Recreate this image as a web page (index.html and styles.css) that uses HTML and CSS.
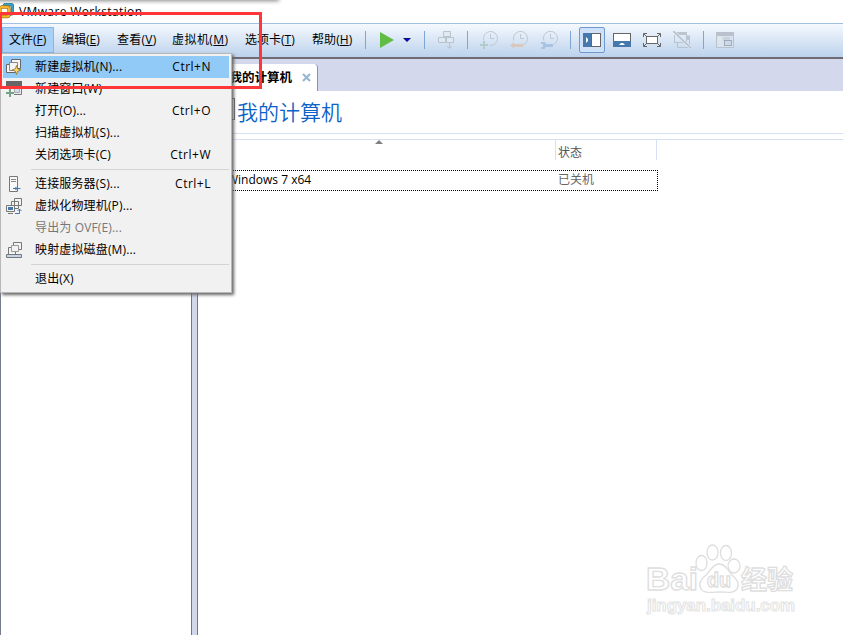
FILE: index.html
```html
<!DOCTYPE html>
<html lang="zh-CN">
<head>
<meta charset="utf-8">
<title>VMware Workstation</title>
<link rel="stylesheet" href="styles.css">
</head>
<body>
<div class="window">
  <header class="titlebar">
    <svg class="logo" width="14" height="16" viewBox="0 0 14 16" fill="none"><rect x="4" y="1.500" width="8.500" height="9.500" rx="2" fill="#fff" stroke="#226f8e" stroke-width="3.400"/><rect x="4" y="1.500" width="8.500" height="9.500" rx="2" stroke="#36a6c8" stroke-width="2"/><rect x="0" y="4" width="9" height="9.500" rx="2" fill="#fff" stroke="#a87416" stroke-width="3.400"/><rect x="0" y="4" width="9" height="9.500" rx="2" stroke="#f6b52c" stroke-width="2"/></svg>
    <span class="title">VMware Workstation</span>
  </header>
  <nav class="toolbar">
    <span class="menu m-file open">文件(<u>F</u>)</span>
    <span class="menu m-edit">编辑(<u>E</u>)</span>
    <span class="menu m-view">查看(<u>V</u>)</span>
    <span class="menu m-vm">虚拟机(<u>M</u>)</span>
    <span class="menu m-tabs">选项卡(<u>T</u>)</span>
    <span class="menu m-help">帮助(<u>H</u>)</span>
    <i class="sep"></i>
    <svg class="play" width="14" height="16" viewBox="0 0 14 16"><path d="M0 0L14 8L0 16Z" fill="#5fbd45"/></svg>
    <svg class="drop" width="8" height="4" viewBox="0 0 8 4"><path d="M0 0H8L4 4Z" fill="#101060"/><path d="M1.500 1H6.500L4 3.200Z" fill="#00f"/></svg>
    <i class="sep s2"></i>
    <span class="cell"><svg width="18" height="20" viewBox="0 0 18 20" fill="#dfe8f3" stroke="#b9c3ce"><path d="M6.500 1.500H13.500V6.500H6.500ZM1.500 7.500H8.500V12.500H1.500ZM9.500 7.500H16.500V12.500H9.500Z"/><path d="M12.500 12V18M10 16L12.500 18.500L15 16" fill="none"/></svg></span>
    <i class="sep s3"></i>
    <span class="cell c4"><svg width="18" height="20" viewBox="0 0 18 20" fill="none" stroke="#bfc8d1"><path d="M3.800 10.500A7 7 0 1 1 9.500 15.400M10.500 4V8.500H14"/><path d="M4 11V19M0 15H8" stroke="#b2ccca" stroke-width="2"/></svg></span>
    <span class="cell"><svg width="18" height="20" viewBox="0 0 18 20" fill="none" stroke="#bfc8d1"><path d="M3.800 10.500A7 7 0 1 1 12.500 15.100M10.500 4V8.500H14"/><path d="M0 15.500L4 12V14H13V17H4V19Z" fill="#d9c9bd" stroke="none"/></svg></span>
    <span class="cell"><svg width="18" height="20" viewBox="0 0 18 20" fill="none" stroke="#bfc8d1"><path d="M3.800 10.500A7 7 0 1 1 13.500 14.600M10.500 4V8.500H14"/><path d="M1 12H5L6 14H13V17H6L5 19H1V17H3V14H1Z" fill="#a9c4e2" stroke="none"/></svg></span>
    <i class="sep s5"></i>
    <span class="cell c6"><span class="pressed"><svg width="18" height="14" viewBox="0 0 18 14"><rect x=".5" y=".5" width="17" height="13" fill="#fff" stroke="#666"/><path d="M0 0H8V14H0Z" fill="#4579ad"/><path d="M8.500 0V14" stroke="#666"/><path d="M3 4L5 6V8L3 10Z" fill="#fff"/></svg></span></span>
    <span class="cell"><svg width="18" height="14" viewBox="0 0 18 14"><rect x=".5" y=".5" width="17" height="13" fill="#fff" stroke="#666"/><path d="M0 8H18V14H0Z" fill="#4579ad"/><path d="M6 12L8 10H10L12 12Z" fill="#fff"/></svg></span>
    <span class="cell"><svg width="18" height="14" viewBox="0 0 18 14" fill="none" stroke="#666"><rect x="3.500" y="3.500" width="11" height="7" fill="#fff"/><path d="M.5 4V.5H4M14 .5H17.500V4M17.500 10V13.500H14M4 13.500H.5V10M1 1L3.500 3.500M17 1L14.500 3.500M1 13L3.500 10.500M17 13L14.500 10.500"/></svg></span>
    <span class="cell"><svg width="18" height="18" viewBox="0 0 18 18" fill="none" stroke="#b9c3ce"><path d="M1.500 4V11.500H13.500V2M4.500 12V16.500H16.500V5H13"/><path d="M2 1H14V4H2ZM13 5H17V9H13Z" fill="#bcc5cf" stroke="none"/><path d="M0 0L18 17" stroke="#dce6f2" stroke-width="3"/><path d="M0 0L18 17" stroke="#aeb9c5" stroke-width="1.200"/></svg></span>
    <i class="sep s5"></i>
    <span class="cell c5"><svg width="18" height="16" viewBox="0 0 18 16" fill="none" stroke="#b7c2ce"><path d="M.5 .5H17.500V15.500H.5Z" fill="#d9e3ef"/><path d="M0 0H18V4H0Z" fill="#b9c2cc" stroke="none"/><path d="M2 5.500H5M2 7.500H5M2 9.500H5" stroke="#e9ebe6"/><path d="M7 5H14V9H7Z" fill="#c7d3e1" stroke="none"/><rect x="8.500" y="8.500" width="7" height="5" fill="#cbd9e9" stroke="#9eabb9"/></svg></span>
  </nav>
  <main class="body">
    <aside class="library"></aside>
    <div class="splitter"></div>
    <section class="content">
      <div class="tabs"><div class="tab"><b>我的计算机</b><svg width="9" height="9" viewBox="0 0 9 9"><path d="M1 1L8 8M8 1L1 8" stroke="#9ab7d1" stroke-width="2.200"/></svg></div></div>
      <div class="heading"><i class="monitor"></i><h1>我的计算机</h1></div>
      <div class="rule"></div>
      <div class="thead"><div class="c-name"><i class="sort"></i></div><div class="c-state">状态</div></div>
      <div class="row"><span class="r-name">Windows 7 x64</span><span class="r-state">已关机</span></div>
      <svg class="watermark" width="160" height="76" viewBox="0 0 160 76" fill="#fff" stroke="#dedede">
        <text class="wm-big" x="5" y="47" textLength="52" lengthAdjust="spacingAndGlyphs">Bai</text>
        <text class="wm-cjk" x="100" y="46" textLength="52" lengthAdjust="spacingAndGlyphs">经验</text>
        <ellipse cx="60.500" cy="20" rx="5.500" ry="7.500"/><ellipse cx="71.500" cy="9.500" rx="5.500" ry="7.500"/><ellipse cx="85" cy="10" rx="5.500" ry="7.500"/><ellipse cx="93" cy="23" rx="6" ry="7"/>
        <path d="M78 21C72 21 70 27 65 32C60 36 57 41 60 46C63 51 72 49 79 49C86 49 92 51 96 46C99 41 96 36 91 32C87 28 85 21 78 21Z"/>
        <text class="wm-du" x="66" y="44" textLength="24" lengthAdjust="spacingAndGlyphs">du</text>
        <text class="wm-url" x="6" y="68" textLength="148" lengthAdjust="spacingAndGlyphs">jingyan.baidu.com</text>
      </svg>
    </section>
  </main>
  <div class="overhang"></div>
  <div class="dropdown">
    <div class="item hot"><svg width="16" height="16" viewBox="0 0 16 16" fill="#f5f5f5" stroke="#666"><path d="M5.500 .5H14.500V9.500H5.500Z"/><path d="M.5 5.500H9.500V13.500H.5Z"/><path d="M3.500 3.500H11.500V11.500H3.500Z" stroke="#888"/><path d="M10.500 6.500L11.700 9.800L15 11L11.700 12.200L10.500 15.500L9.300 12.200L6 11L9.300 9.800Z" fill="#ffd766" stroke="#846b31" stroke-width=".7"/></svg><span>新建虚拟机(N)...</span><kbd>Ctrl+N</kbd></div>
    <div class="item"><svg width="16" height="16" viewBox="0 0 16 16"><path d="M.5 .5H15.500V13.500H.5Z" fill="#eee" stroke="#777"/><path d="M0 0H16V5H0Z" fill="#666"/><path d="M8.500 6.500H13.500V11.500H8.500Z" fill="#ccd9ee" stroke="#aaa"/><path d="M0 7H8V16H0Z" fill="#f1f1f1"/><path d="M4 8V16M0 12H8" stroke="#74a38a" stroke-width="2"/></svg><span>新建窗口(W)</span></div>
    <div class="item"><i></i><span>打开(O)...</span><kbd>Ctrl+O</kbd></div>
    <div class="item"><i></i><span>扫描虚拟机(S)...</span></div>
    <div class="item"><i></i><span>关闭选项卡(C)</span><kbd>Ctrl+W</kbd></div>
    <hr>
    <div class="item"><svg width="16" height="16" viewBox="0 0 16 16" fill="none" stroke="#777"><path d="M3.500 .5H11.500V15.500H3.500Z" fill="#f8f8f8"/><path d="M5 3.500H10M5 5.500H10" stroke="#888"/><path d="M7 12.500H14.500" stroke="#4579ad"/><path d="M8 12.500L10.500 10.500V14.500Z" fill="#4579ad" stroke="none"/></svg><span>连接服务器(S)...</span><kbd>Ctrl+L</kbd></div>
    <div class="item"><svg width="16" height="16" viewBox="0 0 16 16" fill="#f3f3f3" stroke="#777"><path d="M8.500 .5H15.500V7.500H8.500ZM5.500 3.500H12.500V10.500H5.500Z"/><path d="M.5 7.500H8.500V13.500H.5ZM2 15.500H7"/><path d="M2 9H7V12H2Z" fill="#4579ad" stroke="none"/><path d="M9 15.500H13.500V11M11.500 13L13.500 11L15.500 13" fill="none" stroke="#4579ad"/></svg><span>虚拟化物理机(P)...</span></div>
    <div class="item off"><i></i><span>导出为 OVF(E)...</span></div>
    <div class="item"><svg width="16" height="16" viewBox="0 0 16 16" fill="#f3f3f3" stroke="#777"><path d="M7.500 .5H15.500V7.500H7.500Z"/><path d="M2.500 5.500H9.500V12.500H2.500Z"/><path d="M5.500 3.500H12.500V9.500H5.500Z" stroke="#999"/><path d="M.5 12.500H15.500V15.500H.5Z" fill="#c8d4e8"/></svg><span>映射虚拟磁盘(M)...</span></div>
    <hr>
    <div class="item"><i></i><span>退出(X)</span></div>
  </div>
  <div class="highlight"></div>
</div>
</body>
</html>
```

FILE: styles.css
```css
* { box-sizing: border-box; }
body { margin: 0; font: 12px/16px "Open Sans", "Noto Sans CJK SC", sans-serif; color: #000; }
.window { position: relative; width: 843px; height: 635px; overflow: hidden; background: #fff; display: flex; flex-direction: column; }
.titlebar { height: 23px; flex: none; display: flex; align-items: flex-start; padding-top: 3px; }
.title { margin: 1px 0 0 5px; letter-spacing: 0.37px; }
.toolbar { height: 36px; flex: none; display: flex; align-items: center; padding: 0 0 2px 2px; background: linear-gradient(#f5f9fe, #bcd2ec); border-top: 1px solid #9fbfe0; border-bottom: 2px solid #6f6b70; }
.menu { height: 26px; line-height: 26px; flex: none; white-space: nowrap; }
.menu u { text-underline-offset: 1px; }
.m-file { width: 52px; padding-left: 6px; }
.m-edit { width: 55px; padding-left: 8px; }
.m-view { width: 55px; padding-left: 8px; letter-spacing: 0.25px; }
.m-vm { width: 72px; padding-left: 8px; letter-spacing: 0.45px; }
.m-tabs { width: 68px; padding-left: 9px; }
.m-help { width: 57px; padding-left: 8px; letter-spacing: 0.1px; }
.open { background: #a9d1f7; border: 1px solid #80b8ef; line-height: 24px; }
.sep { flex: none; width: 1px; height: 18px; background: #7ea5d3; margin-left: 4px; }
.play { flex: none; margin-left: 14px; }
.drop { flex: none; margin-left: 9px; }
.s2 { margin-left: 13px; }
.cell { flex: none; width: 30px; height: 28px; display: flex; align-items: center; justify-content: center; }
.s2 + .cell, .c4, .c5, .c6 { margin-left: 6px; }
.s3, .s5 { margin-left: 6px; }
.pressed { width: 26px; height: 26px; flex: none; border: 1px solid #6c99cf; border-radius: 2px; background: #cfe0f9; display: flex; align-items: center; justify-content: center; }
.body { flex: 1; display: flex; min-height: 0; }
.library { width: 191px; border-left: 1px solid #777c8c; background: #fff; }
.splitter { width: 7px; border-left: 1px solid #777; border-right: 1px solid #777; background: #d2d8ea; }
.content { flex: 1; min-width: 0; position: relative; }
.tabs { height: 32px; background: #d3d8ec; padding-top: 5px; }
.tab { width: 120px; height: 27px; background: #fff; border-right: 1px solid #7d97b5; border-top-right-radius: 4px; display: flex; align-items: center; justify-content: flex-end; padding-right: 6px; }
.tab svg { margin-left: 10px; margin-bottom: 1px; }
.tab b { font-size: 12.5px; }
.heading { height: 42px; display: flex; align-items: center; padding-left: 15px; }
.monitor { width: 22px; height: 22px; border: 1px solid #666; margin-top: -6px; }
h1 { font: 21px/28px "Noto Sans CJK SC", sans-serif; font-weight: 350; color: #0a62c8; margin: 0 0 3px 2px; }
.rule { height: 7px; border-top: 1px solid #d5e1f2; border-bottom: 1px solid #d5e1f2; }
.thead { height: 30px; display: flex; align-items: flex-start; color: #555; }
.c-name { width: 358px; height: 20px; border-right: 1px solid #d5e1f2; display: flex; justify-content: center; padding-left: 5px; }
.c-state { width: 101px; height: 20px; border-right: 1px solid #d5e1f2; padding: 5px 0 0 2px; }
.sort { width: 8px; height: 4px; background: #808080; clip-path: polygon(50% 0, 100% 100%, 0 100%); }
.row { width: 460px; height: 21px; border: 1px dotted #000; display: flex; line-height: 17px; padding-left: 28px; }
.r-name { width: 331px; }
.r-state { color: #666; }
.watermark { position: absolute; left: 443px; top: 484px; overflow: visible; stroke-width: 1.3; }
.wm-big { font: bold 32px "Liberation Sans", sans-serif; }
.wm-cjk { font: bold 26px "Noto Sans CJK SC", sans-serif; }
.wm-du { font: bold 20px "Liberation Sans", sans-serif; }
.wm-url { font: bold 16px "Liberation Sans", sans-serif; stroke: #e4e4e4; stroke-width: 1; }
.overhang { position: absolute; left: -10px; top: -8px; width: 288px; height: 8px; box-shadow: 0 0 4px 1px #888; }
.dropdown { position: absolute; left: 0; top: 53px; width: 232px; height: 240px; padding: 2px 2px 0; background: #f1f1f1; border: 1px solid #b8b8b8; box-shadow: 2px 2px 3px #666; }
.item { height: 22px; display: flex; align-items: center; padding: 0 18px 0 3px; white-space: nowrap; }
.item svg, .item i { flex: none; width: 16px; height: 16px; }
.item span { margin-left: 13px; letter-spacing: 0.15px; }
.item kbd { margin-left: auto; font: inherit; letter-spacing: 0.5px; }
.hot { background: #91c9f7; height: 22px; width: 226px; padding-right: 18px; }
.off { color: #777; }
.dropdown hr { border: 0; height: 1px; margin: 3px 0 3px 28px; background: #d4d4d4; }
.highlight { position: absolute; left: 0; top: 12px; width: 262px; height: 77px; border: 3px solid #ff3638; border-left-width: 2px; }
```
